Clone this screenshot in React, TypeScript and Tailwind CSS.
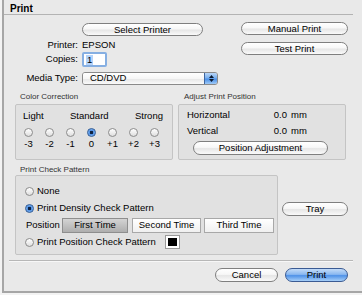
import React from "react";

const font = { fontFamily: '"Liberation Sans", Arial, sans-serif' };

const btn =
  "flex items-center justify-center rounded-full border border-[#7f7f7f] bg-[linear-gradient(to_bottom,#ffffff_0%,#f7f7f7_45%,#e6e6e6_55%,#fafafa_100%)] text-[9.5px] leading-none text-black";

const blueBtn =
  "flex items-center justify-center rounded-full border border-[#3b5b93] bg-[linear-gradient(to_bottom,#c3dbf8_0%,#8ab8f0_45%,#4f92e8_55%,#a7cff8_100%)] text-[9.5px] leading-none text-black";

function Radio({ on = false }: { on?: boolean }) {
  if (on) {
    return (
      <span className="block w-[9px] h-[9px] shrink-0 rounded-full border border-[#2e5a96] bg-[radial-gradient(circle,#0d2140_0%,#0d2140_28%,#4d8fe3_40%,#a8cdf6_100%)]" />
    );
  }
  return (
    <span className="block w-[9px] h-[9px] shrink-0 rounded-full border border-[#8c8c8c] bg-[linear-gradient(to_bottom,#ffffff,#dedede)]" />
  );
}

const levels = ["-3", "-2", "-1", "0", "+1", "+2", "+3"];

export default function App() {
  return (
    <div className="w-[362px] h-[295px] bg-[#f3f3f3] text-black" style={font}>
      <div className="ml-[2px] h-[293px] border-l-2 border-b-2 border-[#a6a6a6] bg-[#e9e9e9] flex flex-col">
        {/* title */}
        <div className="h-[14px] pl-[6px] pt-[2px] flex items-center text-[10px] font-bold">Print</div>
        <div className="h-px bg-[#b3b3b3] mr-[9px]" />

        {/* top controls */}
        <div className="flex">
          <div className="w-[237px] flex flex-col text-[9.5px]">
            <div className="mt-[8px] ml-[78px] w-[121px] h-[13px]">
              <div className={`${btn} w-full h-full`}>Select Printer</div>
            </div>
            <div className="mt-[2px] h-[14px] flex items-center">
              <span className="w-[74px] text-right">Printer:</span>
              <span className="ml-[4px]">EPSON</span>
            </div>
            <div className="h-[15px] flex items-center">
              <span className="w-[74px] text-right">Copies:</span>
              <div className="ml-[4px] w-[25px] h-[15px] rounded-[2px] border-2 border-[#86afe2] bg-white flex items-center pl-[2px]">
                <span className="bg-[#b4d3fb] px-px leading-[10px]">1</span>
              </div>
            </div>
            <div className="mt-[5px] h-[13px] flex items-center">
              <span className="w-[74px] text-right">Media Type:</span>
              <div className="ml-[4px] w-[136px] h-[13px] flex rounded-[3px] border border-[#8a8a8a] overflow-hidden">
                <div className="flex-1 flex items-center pl-[7px] bg-[linear-gradient(to_bottom,#ffffff_0%,#f6f6f6_50%,#e7e7e7_55%,#fafafa_100%)]">CD/DVD</div>
                <div className="w-[13px] flex flex-col items-center justify-center gap-px border-l border-[#3e659f] bg-[linear-gradient(to_bottom,#b9d6f8_0%,#7ab0ee_45%,#4a8fe7_55%,#9fcaf7_100%)]">
                  <svg width="5" height="3" viewBox="0 0 5 3"><path d="M0 3 L2.5 0 L5 3 Z" fill="#0b1a30" /></svg>
                  <svg width="5" height="3" viewBox="0 0 5 3"><path d="M0 0 L2.5 3 L5 0 Z" fill="#0b1a30" /></svg>
                </div>
              </div>
            </div>
          </div>
          <div className="w-[107px] flex flex-col">
            <div className={`${btn} mt-[7px] h-[13px]`}>Manual Print</div>
            <div className={`${btn} mt-[7px] h-[13px]`}>Test Print</div>
          </div>
        </div>

        {/* color correction / adjust position */}
        <div className="flex ml-[11px] mt-[6px] gap-[5px]">
          <div className="flex flex-col">
            <div className="h-[12px] pl-[5px] flex items-center text-[8px] text-[#333]">Color Correction</div>
            <div className="mt-px w-[158px] h-[56px] rounded-[2px] border border-[#c4c4c4] bg-[#e1e1e1] flex flex-col text-[9.5px]">
              <div className="mt-[5px] h-[12px] flex items-center justify-between pl-[7px] pr-[9px]">
                <span>Light</span>
                <span>Standard</span>
                <span>Strong</span>
              </div>
              <div className="mt-[5px] ml-[2px] w-[147px] grid grid-cols-7">
                {levels.map((l) => (
                  <div key={l} className="flex justify-center h-[10px] items-center">
                    <Radio on={l === "0"} />
                  </div>
                ))}
              </div>
              <div className="mt-[2px] ml-[2px] w-[147px] grid grid-cols-7">
                {levels.map((l) => (
                  <div key={l} className="flex justify-center h-[10px] items-center">{l}</div>
                ))}
              </div>
            </div>
          </div>
          <div className="flex flex-col">
            <div className="h-[12px] pl-[6px] flex items-center text-[8px] text-[#333]">Adjust Print Position</div>
            <div className="mt-px w-[168px] h-[56px] rounded-[2px] border border-[#c4c4c4] bg-[#e1e1e1] flex flex-col text-[9.5px]">
              <div className="mt-[4px] h-[12px] flex items-center pl-[8px]">
                <span className="w-[84px]">Horizontal</span>
                <span className="w-[16px] text-right">0.0</span>
                <span className="ml-[4px]">mm</span>
              </div>
              <div className="mt-[4px] h-[12px] flex items-center pl-[8px]">
                <span className="w-[84px]">Vertical</span>
                <span className="w-[16px] text-right">0.0</span>
                <span className="ml-[4px]">mm</span>
              </div>
              <div className={`${btn} mt-[4px] ml-[14px] w-[135px] h-[14px]`}>Position Adjustment</div>
            </div>
          </div>
        </div>

        {/* print check pattern + tray */}
        <div className="flex ml-[11px] mt-[4px] gap-[4px]">
          <div className="flex flex-col">
            <div className="h-[11px] pl-[5px] flex items-center text-[8px] text-[#333]">Print Check Pattern</div>
            <div className="w-[263px] h-[80px] rounded-[2px] border border-[#c4c4c4] bg-[#e1e1e1] flex flex-col text-[9.5px]">
              <div className="mt-[9px] h-[12px] flex items-center pl-[9px] gap-[3px]">
                <Radio />
                <span>None</span>
              </div>
              <div className="mt-[5px] h-[12px] flex items-center pl-[9px] gap-[3px]">
                <Radio on />
                <span>Print Density Check Pattern</span>
              </div>
              <div className="mt-[4px] h-[15px] flex items-center pl-[10px]">
                <span className="w-[36px]">Position</span>
                <div className="w-[66px] h-[15px] flex items-center justify-center border border-[#8e8e8e] bg-[linear-gradient(to_bottom,#d4d4d4,#aeaeae)]">First Time</div>
                <div className="ml-[4px] w-[69px] h-[15px] flex items-center justify-center border border-[#a8a8a8] bg-[linear-gradient(to_bottom,#ffffff,#f0f0f0)]">Second Time</div>
                <div className="ml-[3px] w-[70px] h-[15px] flex items-center justify-center border border-[#a8a8a8] bg-[linear-gradient(to_bottom,#ffffff,#f0f0f0)]">Third Time</div>
              </div>
              <div className="mt-[3px] h-[12px] flex items-center pl-[9px]">
                <div className="w-[140px] flex items-center gap-[3px]">
                  <Radio />
                  <span>Print Position Check Pattern</span>
                </div>
                <div className="w-[15px] h-[14px] border border-[#9a9a9a] bg-white p-[2px]">
                  <div className="w-full h-full bg-black" />
                </div>
              </div>
            </div>
          </div>
          <div className={`${btn} mt-[38px] w-[66px] h-[14px]`}>Tray</div>
        </div>

        {/* separator */}
        <div className="mt-[5px] ml-[5px] mr-[9px] h-px bg-[#b7b7b7] border-b border-[#f7f7f7] box-content" />

        {/* bottom buttons */}
        <div className="mt-[6px] flex justify-end pr-[14px] gap-[7px]">
          <div className={`${btn} w-[63px] h-[14px]`}>Cancel</div>
          <div className={`${blueBtn} w-[63px] h-[14px]`}>Print</div>
        </div>
      </div>
    </div>
  );
}
